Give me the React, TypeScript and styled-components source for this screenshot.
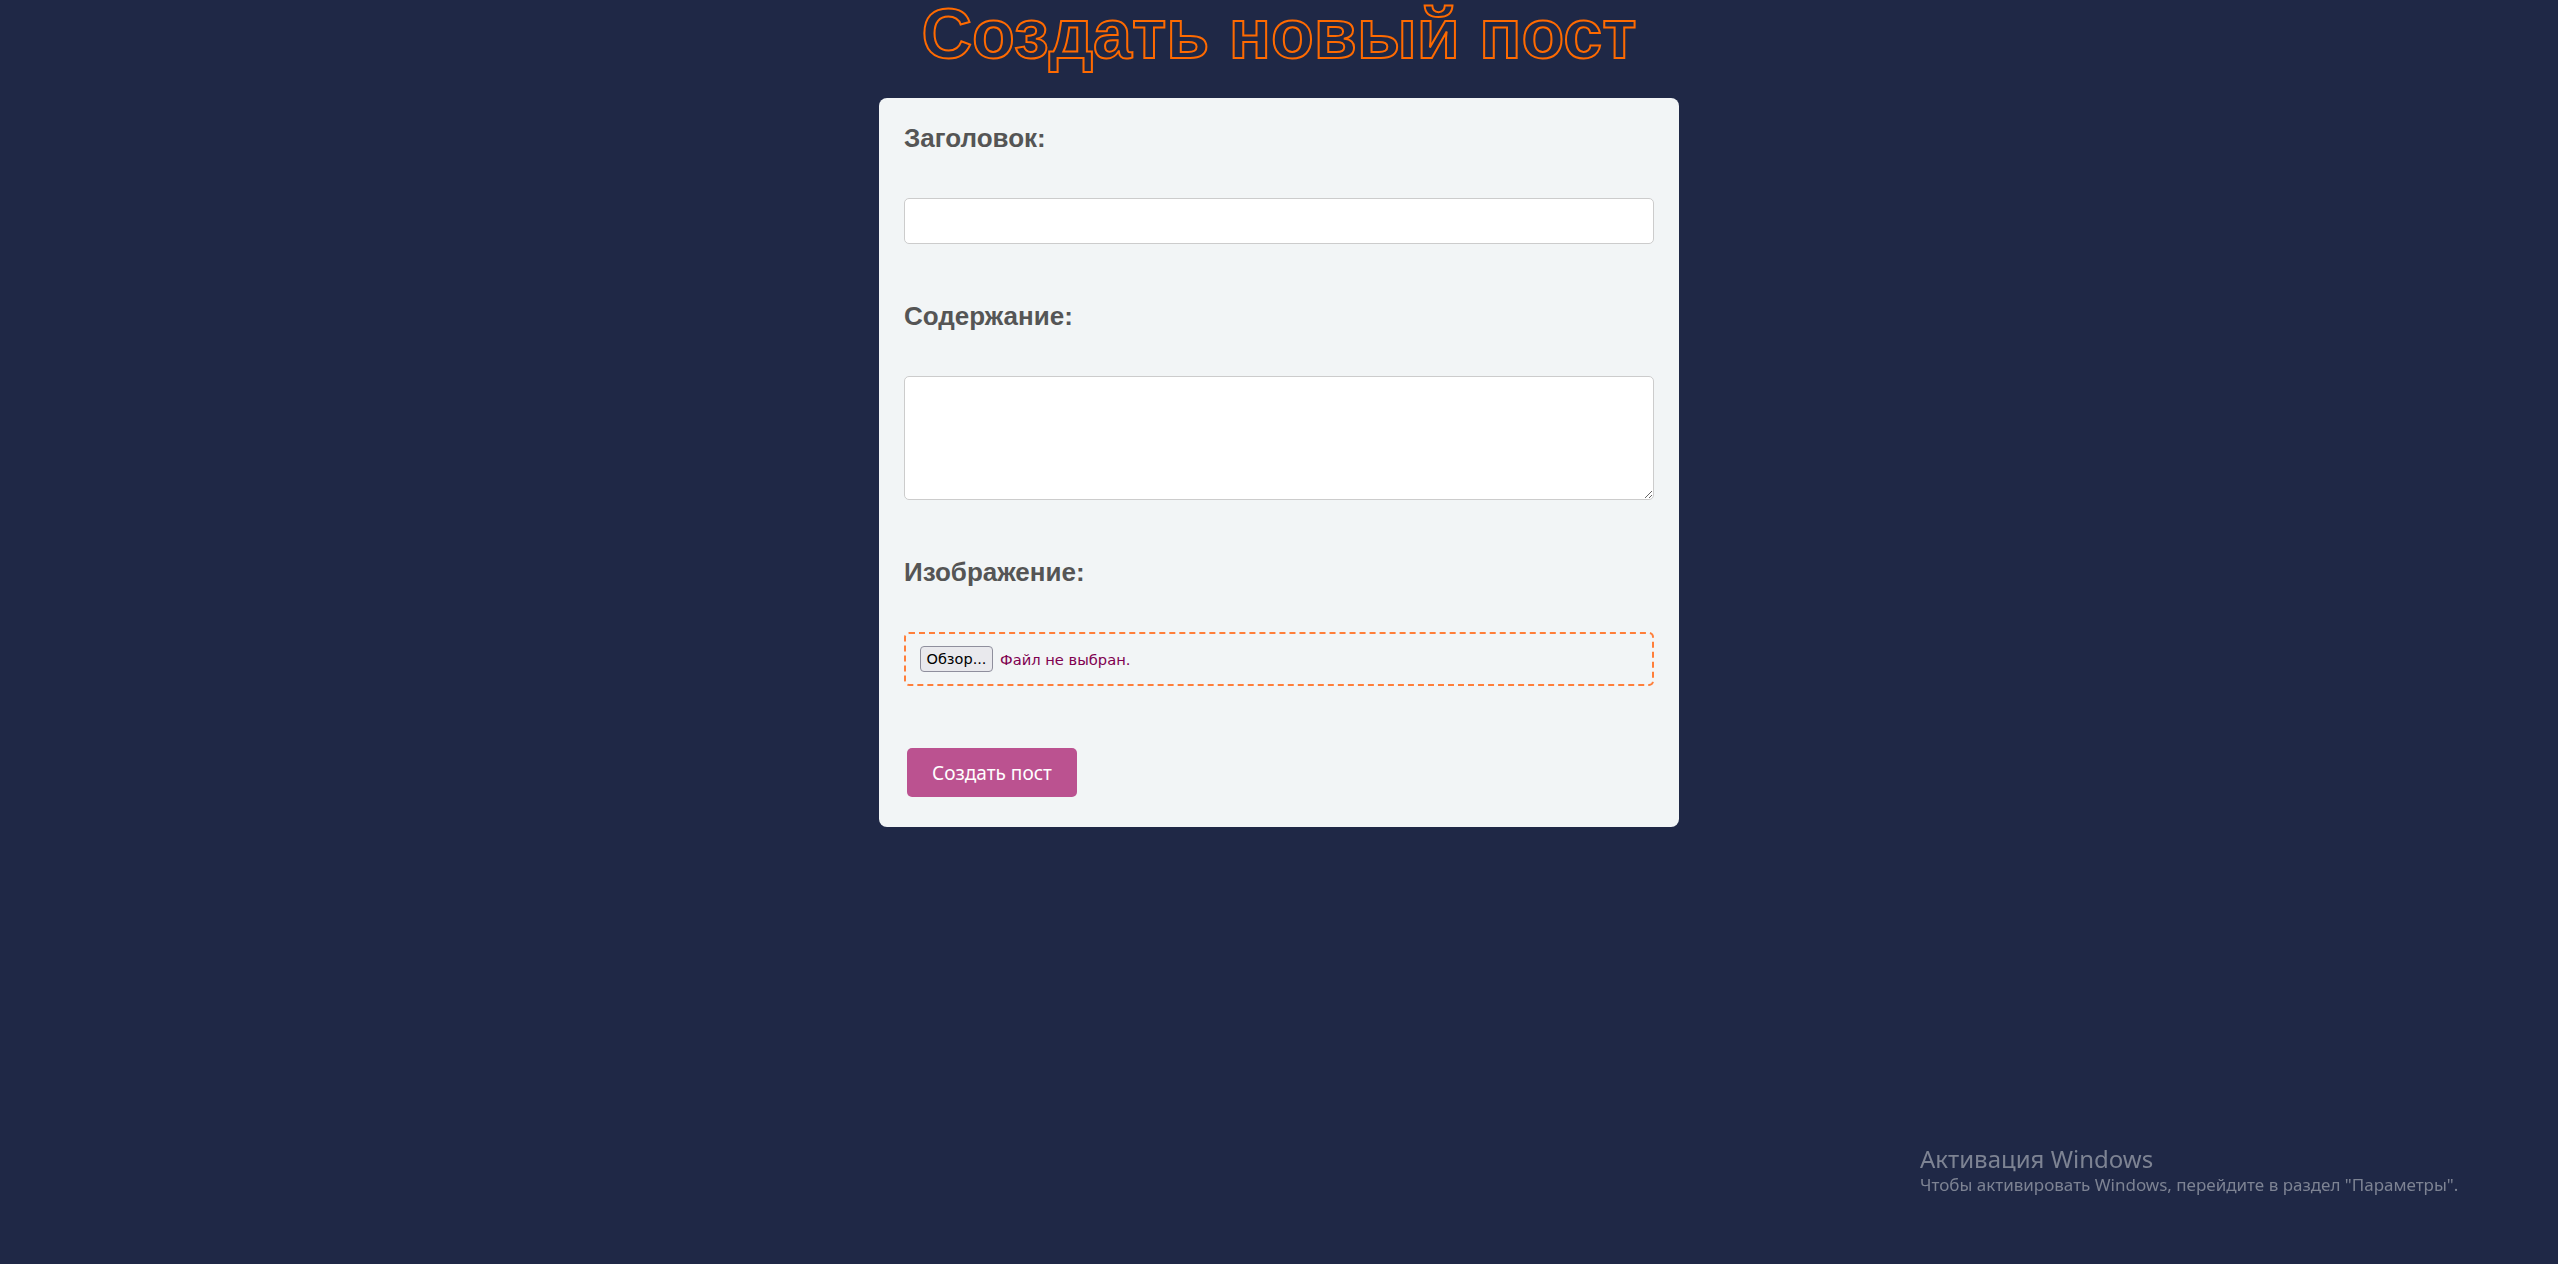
import React from "react";
import styled, { createGlobalStyle } from "styled-components";

const GlobalStyle = createGlobalStyle`
  html, body {
    margin: 0;
    padding: 0;
    background: #1f2846;
  }
  body {
    font-family: "Liberation Sans", Arial, sans-serif;
  }
  *, *::before, *::after {
    box-sizing: border-box;
  }
`;

const Page = styled.main`
  min-height: 1264px;
  display: flex;
  flex-direction: column;
  align-items: center;
`;

const Title = styled.h1`
  margin: 0 0 30px;
  font-family: "Liberation Sans", Arial, sans-serif;
  font-size: 70px;
  line-height: 68px;
  font-weight: 700;
  color: transparent;
  -webkit-text-stroke: 2px #ff6a00;
`;

const Card = styled.form`
  width: 800px;
  background: #f2f5f6;
  border-radius: 8px;
  padding: 25px 25px 30px;
  display: flex;
  flex-direction: column;
`;

const Group = styled.div`
  display: flex;
  flex-direction: column;
  margin-bottom: 57px;
  &:last-of-type {
    margin-bottom: 0;
  }
`;

const Label = styled.label`
  display: block;
  font-size: 26px;
  line-height: 30px;
  font-weight: 700;
  color: #555555;
  margin-bottom: 45px;
`;

const TextInput = styled.input`
  width: 100%;
  height: 46px;
  border: 1px solid #cccccc;
  border-radius: 5px;
  background: #ffffff;
  padding: 0 12px;
  font-size: 18px;
  outline: none;
`;

const TextArea = styled.textarea`
  width: 100%;
  height: 124px;
  border: 1px solid #cccccc;
  border-radius: 5px;
  background: #ffffff;
  padding: 10px 12px;
  font-size: 18px;
  outline: none;
  resize: both;
  display: block;
`;

const FileBox = styled.label`
  display: flex;
  align-items: center;
  gap: 7px;
  height: 54px;
  border: 2px dashed #ff7f3a;
  border-radius: 5px;
  padding: 0 14px;
  cursor: pointer;
`;

const HiddenFile = styled.input`
  display: none;
`;

const BrowseButton = styled.span`
  display: inline-flex;
  align-items: center;
  justify-content: center;
  width: 73px;
  height: 26px;
  background: #e9e9ed;
  border: 1px solid #8f8f9d;
  border-radius: 4px;
  font-family: "DejaVu Sans", Verdana, sans-serif;
  font-size: 14.5px;
  color: #000000;
`;

const FileStatus = styled.span`
  font-family: "DejaVu Sans", Verdana, sans-serif;
  font-size: 14.7px;
  color: #800050;
`;

const Submit = styled.button`
  align-self: flex-start;
  margin: 62px 0 0 3px;
  width: 170px;
  height: 49px;
  border: none;
  border-radius: 5px;
  background: #bb5290;
  color: #ffffff;
  font-family: "Noto Sans", "DejaVu Sans", sans-serif;
  font-size: 19px;
  cursor: pointer;
`;

const Watermark = styled.div`
  position: fixed;
  left: 1920px;
  top: 1143px;
  font-family: "Noto Sans", "Open Sans", sans-serif;
  color: #7d8393;
  pointer-events: none;
`;

const WatermarkTitle = styled.div`
  font-size: 24px;
  line-height: 31px;
`;

const WatermarkText = styled.div`
  font-size: 17px;
  line-height: 22px;
`;

export default function App() {
  return (
    <>
      <GlobalStyle />
      <Page>
        <Title>Создать новый пост</Title>
        <Card onSubmit={(e) => e.preventDefault()}>
          <Group>
            <Label htmlFor="title">Заголовок:</Label>
            <TextInput id="title" type="text" />
          </Group>
          <Group>
            <Label htmlFor="content">Содержание:</Label>
            <TextArea id="content" />
          </Group>
          <Group>
            <Label htmlFor="image">Изображение:</Label>
            <FileBox>
              <HiddenFile id="image" type="file" />
              <BrowseButton>Обзор...</BrowseButton>
              <FileStatus>Файл не выбран.</FileStatus>
            </FileBox>
          </Group>
          <Submit type="submit">Создать пост</Submit>
        </Card>
      </Page>
      <Watermark>
        <WatermarkTitle>Активация Windows</WatermarkTitle>
        <WatermarkText>Чтобы активировать Windows, перейдите в раздел "Параметры".</WatermarkText>
      </Watermark>
    </>
  );
}
